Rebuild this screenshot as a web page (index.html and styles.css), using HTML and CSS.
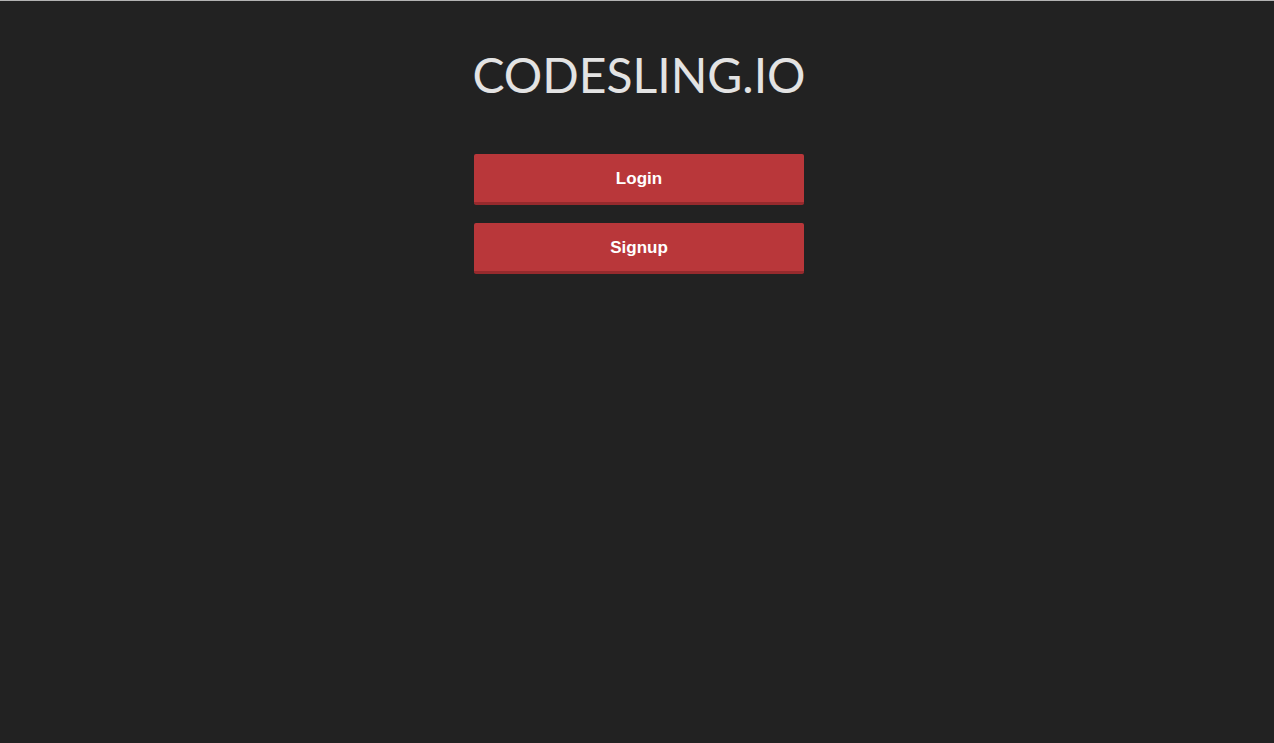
FILE: index.html
```html
<!DOCTYPE html>
<html>
<head>
<meta charset="utf-8">
<link rel="stylesheet" href="styles.css">
</head>
<body>
<div class="page">
  <main class="panel">
    <h1 class="brand">CODESLING.IO</h1>
    <div class="actions">
      <button class="btn">Login</button>
      <button class="btn">Signup</button>
    </div>
  </main>
</div>
</body>
</html>
```
FILE: styles.css
```css
html, body {
  margin: 0;
  padding: 0;
  height: 100%;
  background: #222222;
}
.page {
  min-height: 100%;
  box-sizing: border-box;
  border-top: 1px solid #b3b3b3;
  display: flex;
  justify-content: center;
  padding-left: 4px;
}
.panel {
  width: 330px;
  display: flex;
  flex-direction: column;
  align-items: center;
}
.brand {
  margin: 46px 0 0;
  font-family: Lato, "Open Sans", sans-serif;
  font-weight: 400;
  font-size: 48px;
  letter-spacing: 0;
  line-height: 56px;
  color: #e3e3e3;
  white-space: nowrap;
}
.actions {
  margin-top: 51px;
  width: 100%;
  display: flex;
  flex-direction: column;
  gap: 18px;
}
.btn {
  width: 100%;
  height: 51px;
  border: none;
  border-bottom: 3px solid #962a2d;
  border-radius: 2px;
  background: #b9373a;
  color: #ffffff;
  font-family: "Liberation Sans", Arial, sans-serif;
  font-weight: bold;
  font-size: 17px;
  padding: 2px 0 0;
}
```
